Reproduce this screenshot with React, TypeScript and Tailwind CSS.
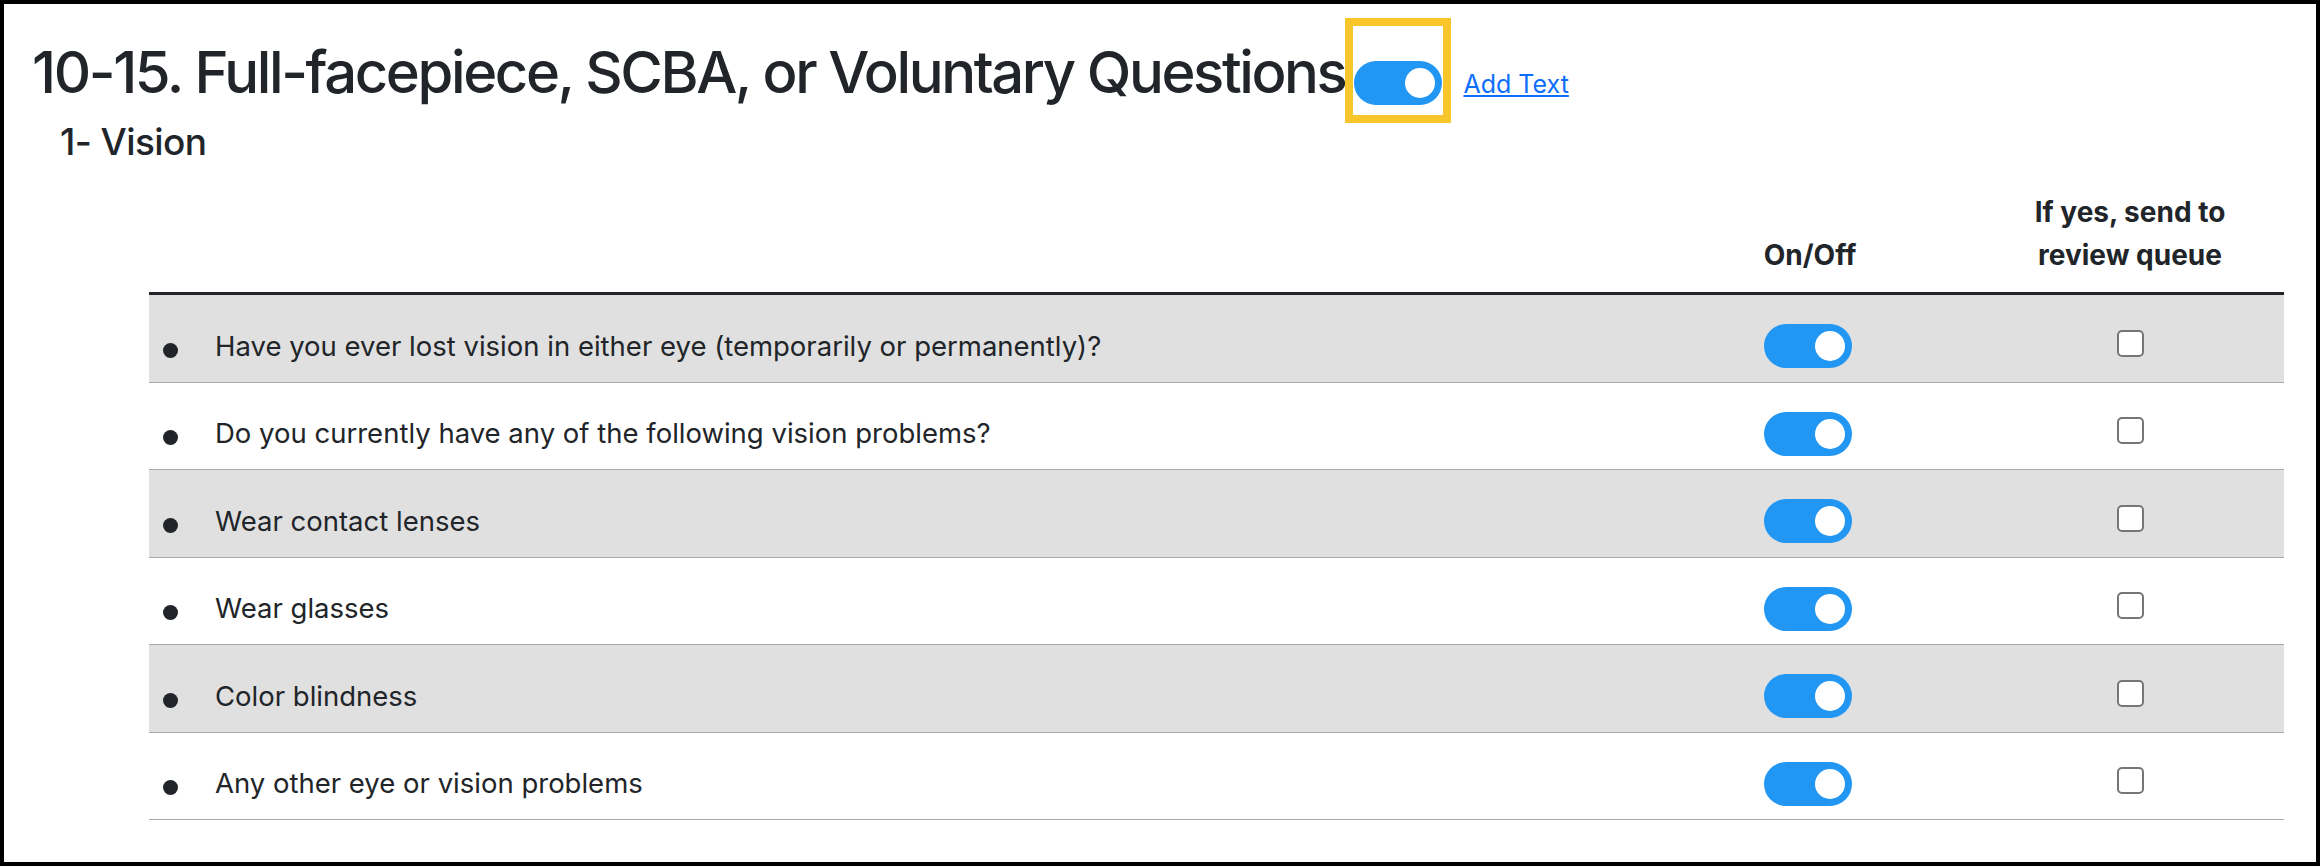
import React, { useState } from 'react';

const questions = [
  'Have you ever lost vision in either eye (temporarily or permanently)?',
  'Do you currently have any of the following vision problems?',
  'Wear contact lenses',
  'Wear glasses',
  'Color blindness',
  'Any other eye or vision problems',
];

const Toggle: React.FC<{ on: boolean; onChange: () => void }> = ({ on, onChange }) => (
  <button
    onClick={onChange}
    className={`flex h-[44px] w-[88px] items-center rounded-full px-[7px] ${
      on ? 'justify-end bg-[#2196f3]' : 'justify-start bg-[#c4c4c4]'
    }`}
    aria-label="Toggle"
  >
    <span className="block h-[30px] w-[30px] rounded-full bg-white" />
  </button>
);

const App: React.FC = () => {
  const [sectionOn, setSectionOn] = useState(true);
  const [rowsOn, setRowsOn] = useState<boolean[]>(questions.map(() => true));
  const [review, setReview] = useState<boolean[]>(questions.map(() => false));

  const flipRow = (i: number) => setRowsOn(rowsOn.map((v, j) => (j === i ? !v : v)));
  const flipReview = (i: number) => setReview(review.map((v, j) => (j === i ? !v : v)));

  return (
    <div className="h-[866px] border-4 border-black bg-white font-['Inter',sans-serif] text-[#212529]">
      {/* Title row */}
      <div className="flex items-start pl-[28px] pt-[14px]">
        <h1 className="mt-[19px] text-[58px] font-medium leading-[70px] tracking-[-2.4px]">
          10-15. Full-facepiece, SCBA, or Voluntary Questions
        </h1>
        <div className="flex h-[105px] w-[106px] items-start justify-center border-8 border-[#f8c52b] pt-[35px]">
          <Toggle on={sectionOn} onChange={() => setSectionOn(!sectionOn)} />
        </div>
        <a href="#" className="ml-[12px] mt-[51px] text-[25px] leading-[30px] text-[#0d6efd] underline">
          Add Text
        </a>
      </div>

      <h2 className="pl-[56px] text-[37px] font-medium leading-[38px] tracking-[-0.6px]">1- Vision</h2>

      {/* Questions table */}
      <div className="ml-[145px] mr-[32px] mt-[30px]">
        <div className="grid grid-cols-[1fr_336px_308px] items-end border-b-[3px] border-[#212529] pb-[15px] text-[28px] font-bold leading-[43px]">
          <div />
          <div className="pl-[4px] text-center">On/Off</div>
          <div className="text-center">
            If yes, send to
            <br />
            review queue
          </div>
        </div>

        {questions.map((q, i) => (
          <div
            key={q}
            className={`grid h-[87.5px] grid-cols-[1fr_336px_308px] items-center border-b border-[#a9a9a9] pt-[16px] text-[27.5px] ${
              i % 2 === 0 ? 'bg-[#e0e0e0]' : 'bg-white'
            }`}
          >
            <div className="flex items-center pl-[14px]">
              <span className="mt-[8px] block h-[15px] w-[15px] rounded-full bg-[#212529]" />
              <span className="ml-[37px]">{q}</span>
            </div>
            <div className="flex justify-center">
              <Toggle on={rowsOn[i]} onChange={() => flipRow(i)} />
            </div>
            <div className="flex justify-center">
              <button
                onClick={() => flipReview(i)}
                className="mb-[6px] flex h-[27px] w-[27px] items-center justify-center rounded-[5px] border-2 border-[#767676] bg-white text-[18px] leading-none text-[#212529]"
                aria-label="Send to review queue"
              >
                {review[i] ? '✓' : ''}
              </button>
            </div>
          </div>
        ))}
      </div>
    </div>
  );
};

export default App;
